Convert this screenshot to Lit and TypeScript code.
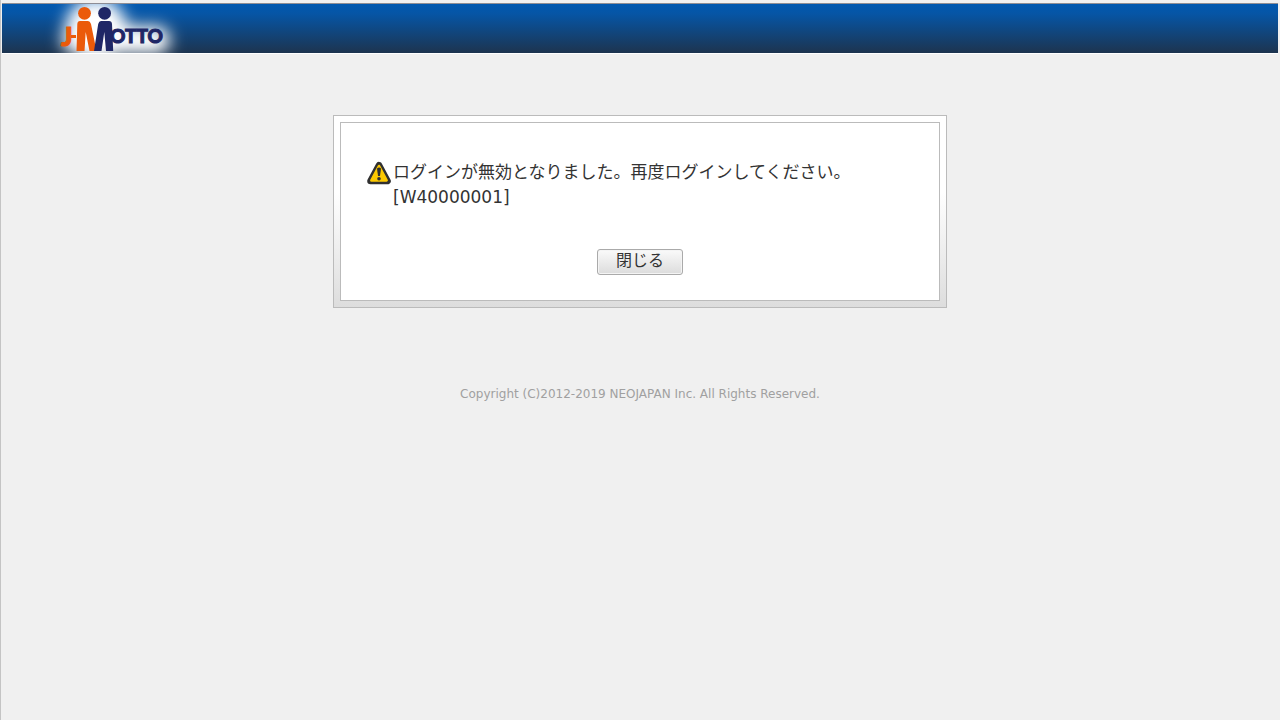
import { LitElement, html, css } from "lit";
import { customElement, property } from "lit/decorators.js";

@customElement("jm-logo")
class JmLogo extends LitElement {
  static styles = css`
    :host { display: block; line-height: 0; }
    .letters { font-family: Lato, "Liberation Sans", sans-serif; font-weight: 900; stroke-width: 1; }
    .orange { fill: #eb5a0a; }
    .navy { fill: #1f2766; }
    .orange-edge { stroke: #eb5a0a; }
    .navy-edge { stroke: #1f2766; }
  `;
  render() {
    return html`
      <svg width="170" height="49" viewBox="30 4 170 49" role="img" aria-label="J-MOTTO">
        <defs>
          <filter id="soft" x="-40%" y="-80%" width="180%" height="260%">
            <feGaussianBlur stdDeviation="8" />
          </filter>
        </defs>
        <g fill="#fff" filter="url(#soft)">
          <ellipse cx="96" cy="30" rx="31" ry="32" />
          <rect x="62" y="26" width="108" height="28" rx="14" />
        </g>
        <text class="letters orange orange-edge" x="61" y="46" font-size="27">J</text>
        <rect class="orange" x="71" y="35" width="5" height="3" />
        <circle class="orange" cx="84.5" cy="13.3" r="6.4" />
        <path class="orange" d="M80 21H88Q90 21 91 24L96.5 51H89.5L85.7 32L84.5 51H76.5L77.3 24Q77.5 21 80 21Z" />
        <circle class="navy" cx="104.6" cy="13.3" r="6.4" />
        <path class="navy" d="M101 21H109Q111.8 21 112 24L113.2 51H106L104.3 32L101.5 51H94L98.2 24Q99 21 101 21Z" />
        <text class="letters navy navy-edge" x="110" y="43" font-size="19">OTTO</text>
      </svg>
    `;
  }
}

@customElement("message-panel")
class MessagePanel extends LitElement {
  @property() message = "";
  @property() code = "";

  static styles = css`
    :host { display: block; width: 100%; max-width: 614px; }
    .frame {
      padding: 6px;
      border: 1px solid #bbb;
      background: linear-gradient(#fff 0%, #fff 40%, #ddd 100%);
    }
    .panel {
      display: flex;
      flex-direction: column;
      gap: 39px;
      padding: 37px 26px 25px;
      border: 1px solid #bbb;
      background: #fff;
    }
    .notice { display: flex; align-items: flex-start; gap: 2px; }
    .icon { flex: none; display: block; margin-top: 1px; }
    .text { margin: 0; font-size: 17px; line-height: 25px; }
    .line { display: block; }
    .actions { display: flex; justify-content: center; }
    .close {
      width: 86px;
      height: 26px;
      padding: 0 0 2px;
      border: 1px solid #aaa;
      border-radius: 3px;
      background: linear-gradient(#fafafa, #dcdcdc);
      box-shadow: inset 0 0 0 1px #f4f4f4;
      color: #333;
      font: inherit;
      font-size: 16px;
      line-height: 20px;
      cursor: pointer;
    }
  `;
  render() {
    return html`
      <div class="frame">
        <section class="panel" role="alert">
          <div class="notice">
            <svg class="icon" width="24" height="24" viewBox="0 0 24 24" aria-hidden="true">
              <path d="M12 4.2L20.5 20H3.5Z" fill="#303030" stroke="#303030" stroke-width="6.6" stroke-linejoin="round" />
              <path d="M12 5L19.6 19.4H4.4Z" fill="#fdc900" stroke="#fdc900" stroke-width="2.6" stroke-linejoin="round" />
              <path d="M10 7.4Q12 5.4 14 7.4L13 15H11Z" fill="#303030" />
              <circle cx="12" cy="17.8" r="1.8" fill="#303030" />
            </svg>
            <p class="text">
              <span class="line">${this.message}</span>
              <span class="line">[${this.code}]</span>
            </p>
          </div>
          <div class="actions"><button class="close" type="button">閉じる</button></div>
        </section>
      </div>
    `;
  }
}

@customElement("app-root")
class AppRoot extends LitElement {
  static styles = css`
    :host {
      display: block;
      box-sizing: border-box;
      min-height: 100vh;
      border-left: 1px solid #c4c4c4;
      background: #f0f0f0;
      color: #333;
      font-family: "DejaVu Sans", "Noto Sans CJK JP", sans-serif;
    }
    .page { padding: 3px 2px 0 1px; }
    .header {
      display: flex;
      height: 49px;
      padding-left: 28px;
      border-top: 1px solid #8d8d94;
      border-bottom: 1px solid #fff;
      background: linear-gradient(#0058b0 0%, #0655a5 20%, #1d344f 100%);
    }
    .main { display: flex; justify-content: center; padding-top: 61px; }
    .footer {
      padding-top: 78px;
      color: #a0a0a0;
      font-size: 12px;
      line-height: 16px;
      text-align: center;
    }
  `;
  render() {
    return html`
      <div class="page">
        <header class="header"><jm-logo></jm-logo></header>
        <main class="main">
          <message-panel
            message="ログインが無効となりました。再度ログインしてください。"
            code="W40000001"
          ></message-panel>
        </main>
        <footer class="footer">Copyright (C)2012-2019 NEOJAPAN Inc. All Rights Reserved.</footer>
      </div>
    `;
  }
}
